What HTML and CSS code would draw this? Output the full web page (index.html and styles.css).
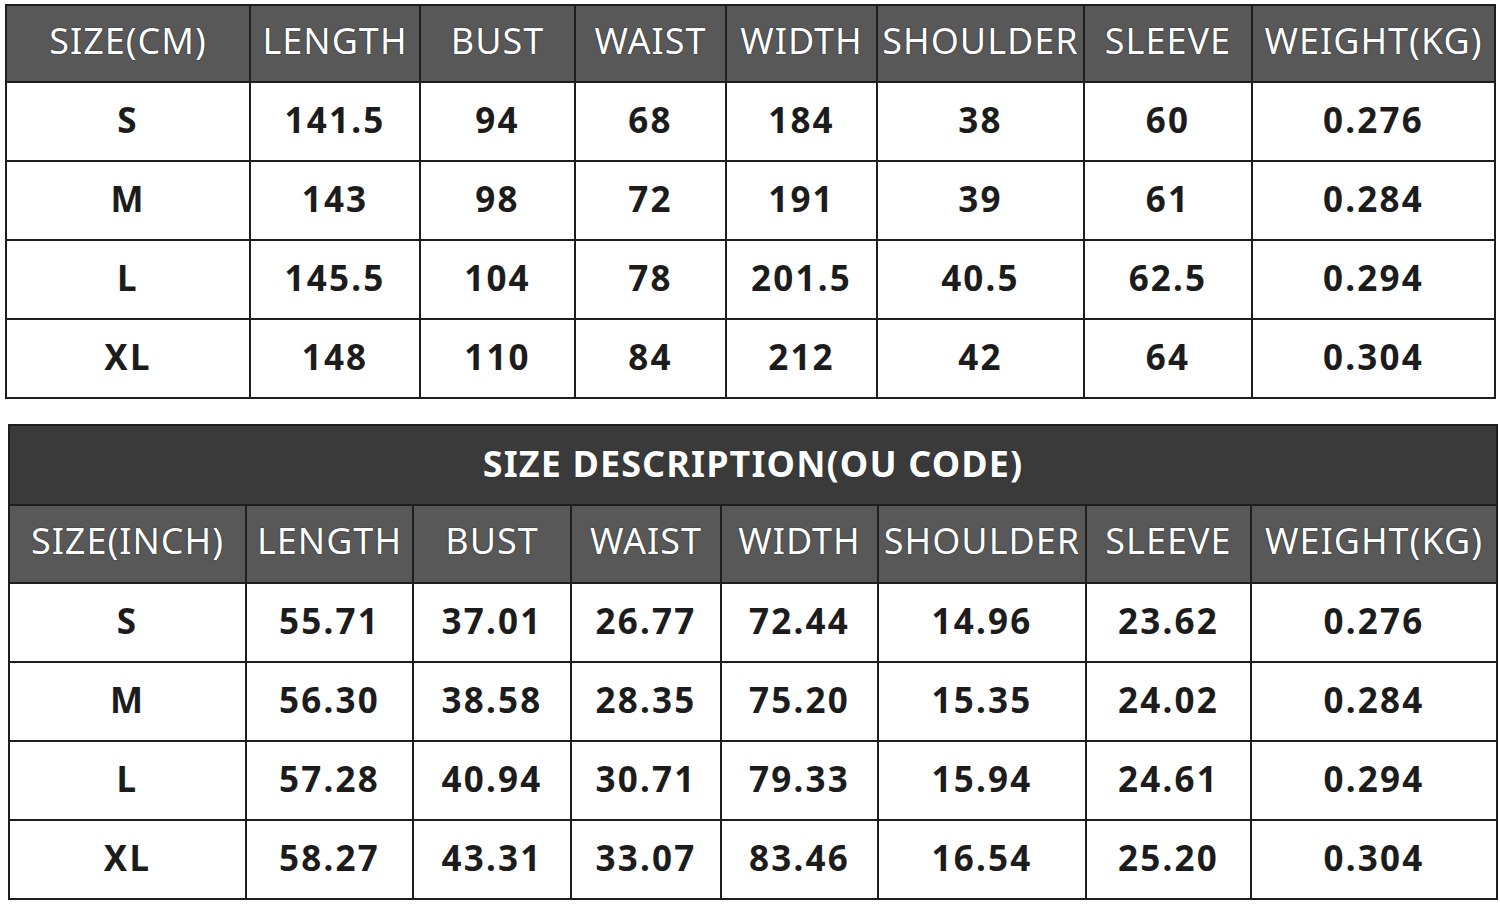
FILE: index.html
```html
<!DOCTYPE html>
<html>
<head>
<meta charset="utf-8">
<link rel="stylesheet" href="styles.css">
</head>
<body>
<div class="page">
  <table class="chart cm">
    <colgroup>
      <col class="c1"><col class="c2"><col class="c3"><col class="c4"><col class="c5"><col class="c6"><col class="c7"><col class="c8">
    </colgroup>
    <thead>
      <tr class="head">
        <th>SIZE(CM)</th><th>LENGTH</th><th>BUST</th><th>WAIST</th><th>WIDTH</th><th>SHOULDER</th><th>SLEEVE</th><th>WEIGHT(KG)</th>
      </tr>
    </thead>
    <tbody>
      <tr><td>S</td><td>141.5</td><td>94</td><td>68</td><td>184</td><td>38</td><td>60</td><td>0.276</td></tr>
      <tr><td>M</td><td>143</td><td>98</td><td>72</td><td>191</td><td>39</td><td>61</td><td>0.284</td></tr>
      <tr><td>L</td><td>145.5</td><td>104</td><td>78</td><td>201.5</td><td>40.5</td><td>62.5</td><td>0.294</td></tr>
      <tr><td>XL</td><td>148</td><td>110</td><td>84</td><td>212</td><td>42</td><td>64</td><td>0.304</td></tr>
    </tbody>
  </table>

  <table class="chart inch">
    <colgroup>
      <col class="c1"><col class="c2"><col class="c3"><col class="c4"><col class="c5"><col class="c6"><col class="c7"><col class="c8">
    </colgroup>
    <thead>
      <tr class="title"><th colspan="8">SIZE DESCRIPTION(OU CODE)</th></tr>
      <tr class="head">
        <th>SIZE(INCH)</th><th>LENGTH</th><th>BUST</th><th>WAIST</th><th>WIDTH</th><th>SHOULDER</th><th>SLEEVE</th><th>WEIGHT(KG)</th>
      </tr>
    </thead>
    <tbody>
      <tr><td>S</td><td>55.71</td><td>37.01</td><td>26.77</td><td>72.44</td><td>14.96</td><td>23.62</td><td>0.276</td></tr>
      <tr><td>M</td><td>56.30</td><td>38.58</td><td>28.35</td><td>75.20</td><td>15.35</td><td>24.02</td><td>0.284</td></tr>
      <tr><td>L</td><td>57.28</td><td>40.94</td><td>30.71</td><td>79.33</td><td>15.94</td><td>24.61</td><td>0.294</td></tr>
      <tr><td>XL</td><td>58.27</td><td>43.31</td><td>33.07</td><td>83.46</td><td>16.54</td><td>25.20</td><td>0.304</td></tr>
    </tbody>
  </table>
</div>
</body>
</html>
```
FILE: styles.css
```css
html, body {
  margin: 0;
  padding: 0;
  background: #ffffff;
}

.page {
  width: 1500px;
  height: 905px;
  overflow: hidden;
  padding: 4px 0 0 0;
  box-sizing: border-box;
  display: flex;
  flex-direction: column;
  gap: 25px;
}

.chart {
  border-collapse: collapse;
  table-layout: fixed;
  font-family: "Noto Sans", "Open Sans", sans-serif;
  color: #1c1c1c;
}

.chart th,
.chart td {
  border: 2px solid #1e1e1e;
  text-align: center;
  padding: 0;
  white-space: nowrap;
  overflow: hidden;
  box-sizing: border-box;
}

.chart .head th {
  background: #585858;
  color: #ffffff;
  font-weight: 400;
  font-size: 36px;
  letter-spacing: 1px;
  height: 78px;
  padding-bottom: 7px;
  text-shadow: 0 0 1px #222, 0 0 1px #222;
}

.chart td {
  font-weight: 700;
  font-size: 35px;
  letter-spacing: 2.2px;
  height: 79px;
  padding-bottom: 4px;
  background: #ffffff;
}

.chart .title th {
  background: #3a3a3a;
  color: #ffffff;
  font-weight: 700;
  font-size: 36px;
  letter-spacing: 1.1px;
  height: 80px;
  padding-bottom: 4px;
  text-shadow: 0 0 1px #111;
}

.inch .head th {
  height: 78px;
}

/* CM table: 5px .. 1495px */
.cm {
  margin-left: 5px;
  width: 1489px;
}
.cm .head th {
  height: 77px;
}
.cm .c1 { width: 244px; }
.cm .c2 { width: 170px; }
.cm .c3 { width: 155px; }
.cm .c4 { width: 151px; }
.cm .c5 { width: 151px; }
.cm .c6 { width: 207px; }
.cm .c7 { width: 168px; }
.cm .c8 { width: 243px; }

/* INCH table: 8px .. 1497px */
.inch {
  margin-left: 8px;
  width: 1488px;
}
.inch .c1 { width: 237px; }
.inch .c2 { width: 167px; }
.inch .c3 { width: 158px; }
.inch .c4 { width: 150px; }
.inch .c5 { width: 157px; }
.inch .c6 { width: 208px; }
.inch .c7 { width: 165px; }
.inch .c8 { width: 246px; }
```
